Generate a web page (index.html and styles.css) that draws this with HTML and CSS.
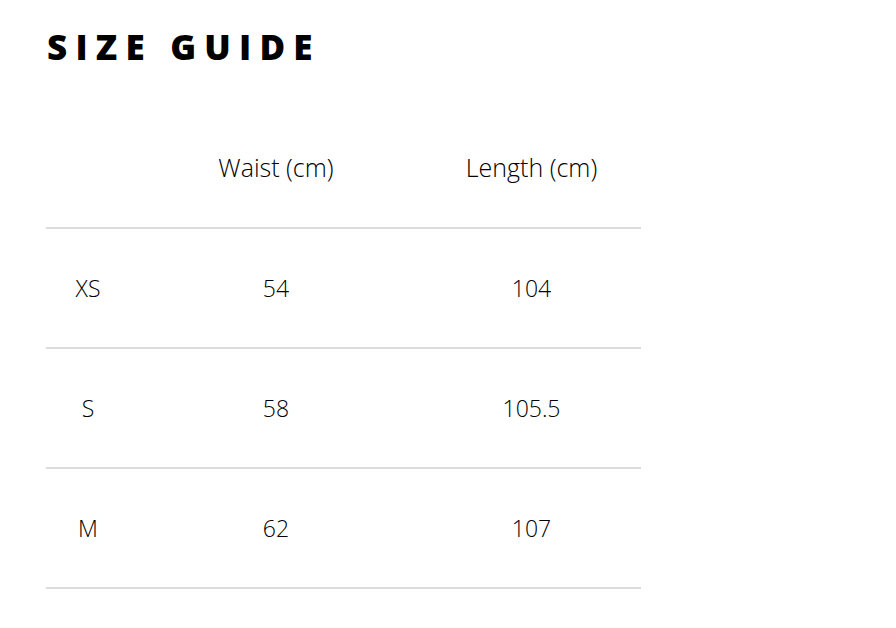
FILE: index.html
```html
<!DOCTYPE html>
<html>
<head>
<meta charset="utf-8">
<link rel="stylesheet" href="styles.css">
</head>
<body>
<main class="page">
  <h1 class="title">SIZE GUIDE</h1>
  <div class="table">
    <div class="row head">
      <div class="cell"></div>
      <div class="cell">Waist (cm)</div>
      <div class="cell">Length (cm)</div>
    </div>
    <div class="row">
      <div class="cell">XS</div>
      <div class="cell">54</div>
      <div class="cell">104</div>
    </div>
    <div class="row">
      <div class="cell">S</div>
      <div class="cell">58</div>
      <div class="cell">105.5</div>
    </div>
    <div class="row">
      <div class="cell">M</div>
      <div class="cell">62</div>
      <div class="cell">107</div>
    </div>
  </div>
</main>
</body>
</html>
```
FILE: styles.css
```css
html, body {
  margin: 0;
  padding: 0;
  background: #fff;
}
.page {
  padding: 26px 0 0 46px;
  width: 595px;
  font-family: "Open Sans", "Lato", sans-serif;
  color: #000;
}
.title {
  margin: 0 0 0 1px;
  font-family: "Open Sans", sans-serif;
  font-weight: 800;
  font-size: 35px;
  line-height: 42px;
  letter-spacing: 0.235em;
  color: #000;
}
.table {
  margin-top: 41px;
  display: flex;
  flex-direction: column;
}
.row {
  display: grid;
  grid-template-columns: 84px 292px 219px;
  height: 120px;
  align-items: center;
  border-bottom: 2px solid #dcdcdc;
  box-sizing: border-box;
}
.cell {
  text-align: center;
  font-size: 23px;
  font-weight: 300;
  line-height: 28px;
}
.head .cell {
  font-size: 25px;
  margin-top: -2px;
}
```
